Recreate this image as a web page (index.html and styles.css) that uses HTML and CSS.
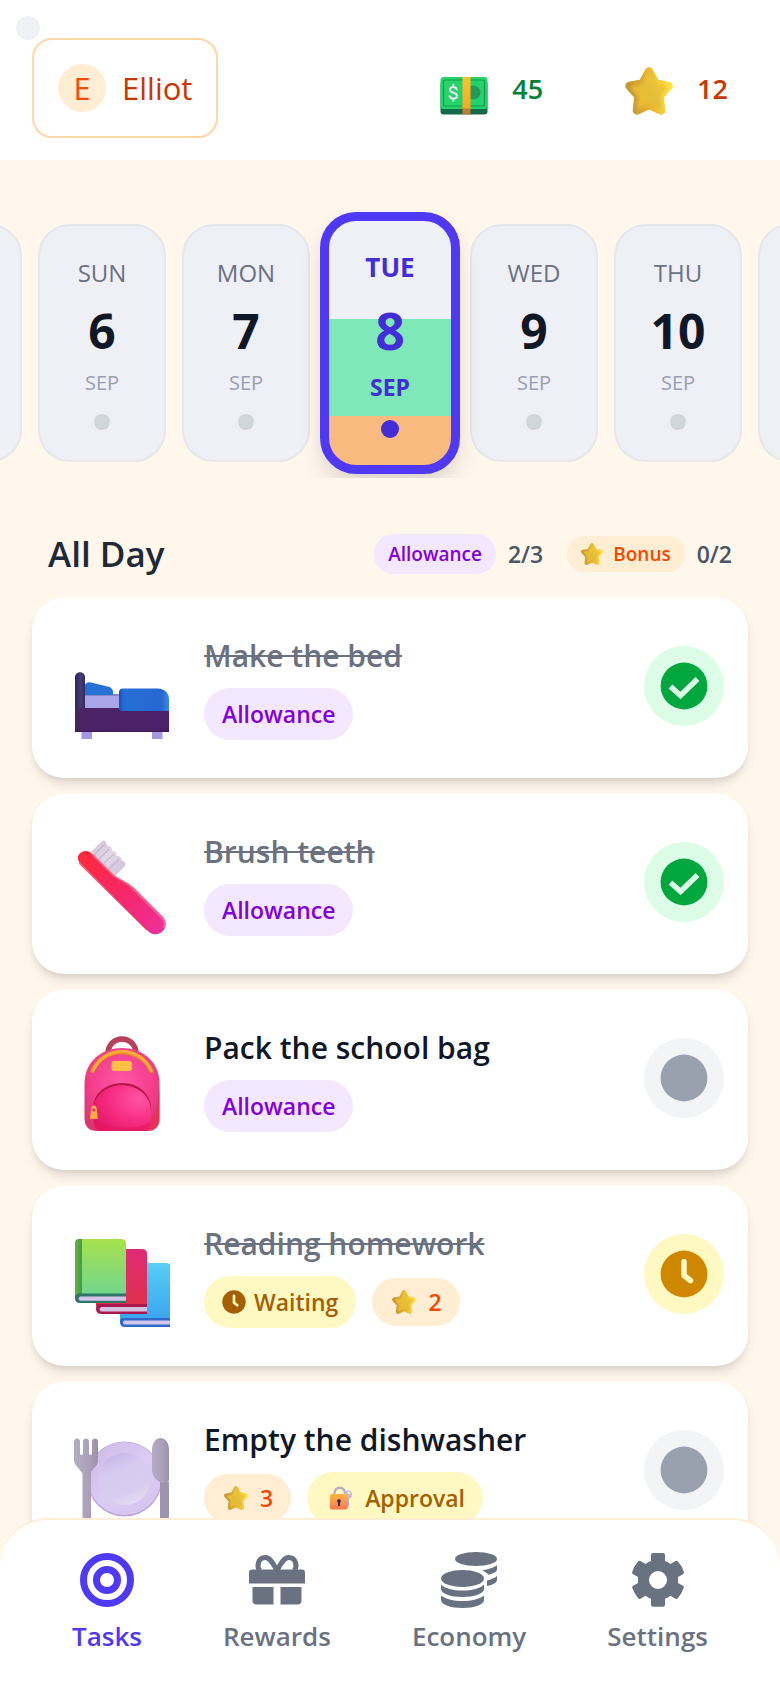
FILE: index.html
```html
<!DOCTYPE html>
<html lang="en">
<head>
<meta charset="utf-8">
<meta name="viewport" content="width=device-width, initial-scale=1">
<title>Tasks</title>
<link rel="stylesheet" href="styles.css">
</head>
<body>
<svg class="sprite" aria-hidden="true">
  <defs>
    <linearGradient id="star-edge" x1="0" y1="0.3" x2="1" y2="0.2"><stop offset="0" stop-color="#c79a34"/><stop offset="0.5" stop-color="#e8b631"/><stop offset="1" stop-color="#ffe03f"/></linearGradient>
    <linearGradient id="star-face" x1="0" y1="1" x2="1" y2="0"><stop offset="0" stop-color="#efb92f"/><stop offset="0.5" stop-color="#e3be38"/><stop offset="1" stop-color="#f2c935"/></linearGradient>
    <filter id="soft" x="-20%" y="-20%" width="140%" height="140%"><feGaussianBlur stdDeviation="1.5"/></filter>
    <linearGradient id="cash" x1="0" x2="1" y2="1"><stop offset="0" stop-color="#2bd36b"/><stop offset="1" stop-color="#1fd36e"/></linearGradient>
    <linearGradient id="band" x2="0" y2="1"><stop offset="0" stop-color="#ffc22e"/><stop offset="1" stop-color="#fba522"/></linearGradient>
    <linearGradient id="wood" x2="1"><stop offset="0" stop-color="#3a2a52"/><stop offset="0.08" stop-color="#4d2366"/><stop offset="1" stop-color="#4b2069"/></linearGradient>
    <linearGradient id="post" x2="1"><stop offset="0" stop-color="#2f2558"/><stop offset="0.6" stop-color="#463b76"/><stop offset="1" stop-color="#352a5a"/></linearGradient>
    <linearGradient id="quilt" x2="1"><stop offset="0" stop-color="#1d4fb4"/><stop offset="0.1" stop-color="#246fd4"/><stop offset="0.85" stop-color="#2768d2"/><stop offset="1" stop-color="#3f8ae0"/></linearGradient>
    <linearGradient id="handle" gradientUnits="userSpaceOnUse" x1="8" y1="15" x2="86" y2="90"><stop offset="0" stop-color="#ff2a3a"/><stop offset="0.5" stop-color="#f62768"/><stop offset="1" stop-color="#ee2f98"/></linearGradient>
    <linearGradient id="bristle" gradientUnits="userSpaceOnUse" x1="16" y1="8" x2="46" y2="36" ><stop offset="0" stop-color="#d4c7d8"/><stop offset="0.5" stop-color="#e3d8ea"/><stop offset="1" stop-color="#cfc0d8"/></linearGradient>
    <radialGradient id="bag" cx="0.5" cy="0.4" r="0.65"><stop offset="0" stop-color="#ff57a5"/><stop offset="0.65" stop-color="#f33d8c"/><stop offset="1" stop-color="#d8386f"/></radialGradient>
    <radialGradient id="pocket" cx="0.8" cy="0.3" r="0.9"><stop offset="0" stop-color="#ff54a2"/><stop offset="0.6" stop-color="#f62a80"/><stop offset="1" stop-color="#e01765"/></radialGradient>
    <linearGradient id="book-g" x2="0" y2="1"><stop offset="0" stop-color="#a6e14c"/><stop offset="1" stop-color="#72d68e"/></linearGradient>
    <linearGradient id="spine-g" x2="1"><stop offset="0" stop-color="#65b53e"/><stop offset="1" stop-color="#419b4c"/></linearGradient>
    <linearGradient id="book-r" x2="0" y2="1"><stop offset="0" stop-color="#df2b75"/><stop offset="1" stop-color="#e0314d"/></linearGradient>
    <linearGradient id="book-b" x2="0" y2="1"><stop offset="0" stop-color="#56cff5"/><stop offset="1" stop-color="#3aa3f0"/></linearGradient>
    <linearGradient id="plate" x2="1" y2="1"><stop offset="0" stop-color="#cbb9e6"/><stop offset="0.5" stop-color="#dccbf3"/><stop offset="1" stop-color="#d5c4ee"/></linearGradient>
    <linearGradient id="dish" x1="0.3" x2="0.7" y2="1"><stop offset="0" stop-color="#c8b5e9"/><stop offset="0.3" stop-color="#d7caf0"/><stop offset="0.75" stop-color="#d8cdef"/><stop offset="1" stop-color="#e6def5"/></linearGradient>
    <linearGradient id="steel" x2="1"><stop offset="0" stop-color="#b5abc3"/><stop offset="0.6" stop-color="#aca1bb"/><stop offset="1" stop-color="#9c90ad"/></linearGradient>
    <linearGradient id="lock" x2="0" y2="1"><stop offset="0" stop-color="#ffb545"/><stop offset="1" stop-color="#f9784f"/></linearGradient>
  </defs>

  <symbol id="i-star" viewBox="0 0 48 48">
    <path d="M24 4.500L30.500 16.500L43.500 19L34.500 29L36 43.500L24 38L12 43.500L13.500 29L4.500 19L17.500 16.500Z" fill="url(#star-edge)" stroke="url(#star-edge)" stroke-width="8.500" stroke-linejoin="round"/>
    <path d="M24 8L30 19L40 20.500L32.500 29L34 40L24 35L14 40L15.500 29L8 20.500L18 19Z" fill="url(#star-face)" stroke="url(#star-face)" stroke-width="3" stroke-linejoin="round" filter="url(#soft)"/>
  </symbol>

  <symbol id="i-cash" viewBox="0 0 48 48">
    <rect x="0.500" y="14" width="47" height="33.500" rx="3" fill="#146b4a"/>
    <rect x="0.500" y="10" width="47" height="32" rx="3" fill="url(#cash)"/>
    <rect x="3.500" y="13" width="41" height="26" rx="2" fill="none" stroke="#159a4c" stroke-width="1.200"/>
    <circle cx="33.500" cy="25.500" r="7" fill="#249b58"/>
    <path d="M16.800 22.500c-.6-1.700-1.800-2.500-3.500-2.500-2.100 0-3.500 1.100-3.500 2.800 0 3.900 7.200 2 7.200 6 0 1.700-1.500 2.800-3.600 2.800-2 0-3.300-.9-3.900-2.700M13.300 17.800v2.200M13.300 31.600v2.200" fill="none" stroke="#f0eaf2" stroke-width="1.900" stroke-linecap="round"/>
    <rect x="22.500" y="10" width="8" height="32" fill="url(#band)"/>
    <rect x="22.500" y="41.500" width="8" height="6" fill="#c27c35"/>
  </symbol>

  <symbol id="i-bed" viewBox="0 0 96 96">
    <path d="M7.500 87h10.500v8H7.500zM78 87h10.500v8H78z" fill="#a697e6"/>
    <path d="M10 50h40v16H10z" fill="#a9a5e6"/>
    <path d="M10 50h40v2H10z" fill="#8b86c6"/>
    <path d="M10 51V43c1-4 4-5.500 7-4.500l18.500 4.500c2.500 1 3.500 3 3.500 5v3z" fill="#2571d5"/>
    <path d="M1 64h94v24H1z" fill="url(#wood)"/>
    <path d="M1 64V33c0-6.500 10-6.500 10 0v31z" fill="url(#post)"/>
    <path d="M45 48.500q0-4 4-4h35c7 0 11 5 11 11V67H48q-3 0-3-3z" fill="url(#quilt)"/>
    <path d="M1 87.200h94" stroke="#3a1a55" stroke-width="1"/>
  </symbol>

  <symbol id="i-brush" viewBox="0 0 96 96">
    <path d="M15 14L27 2q3-3 5 0l1.500 4q5 0 4.500 5 5 0 4.500 5 5-.5 5 4.500 5 1 3.500 5.500L39 38z" fill="url(#bristle)"/>
    <path d="M18 17L31 4M23 21L35 9M27 26L40 14M33 31L45 19" stroke="#c2b5c8" stroke-width="1.500" opacity="0.8"/>
    <path d="M5.500 22.500C0 15 10 7.500 17 13L40 35.500 54 43.500Q58 46 60 48L89 77C97 87 85 99.500 75 92L71 88z" fill="url(#handle)"/>
    <path d="M19 15L40 36 55 45 88 78c3 3.500 3 7 1.500 10" fill="none" stroke="#ff6f91" stroke-width="2" opacity="0.7"/>
    <path d="M5 23L73 90" stroke="#d9244d" stroke-width="1.200" opacity="0.7"/>
  </symbol>

  <symbol id="i-bag" viewBox="0 0 96 96">
    <path d="M34 18C34-2 62-2 62 18" fill="none" stroke="#b93f5b" stroke-width="5.500"/>
    <path d="M10.500 48C10.500 0 85.500 0 85.500 48V82q0 13-13 13H23.500q-13 0-13-13z" fill="url(#bag)"/>
    <path d="M85.500 50V82q0 13-13 13H64c14-5 20-20 21.500-45z" fill="#ef2e52" opacity="0.7"/>
    <path d="M18.500 35C29 10 66 10 77.500 35" fill="none" stroke="#e9832c" stroke-width="4.500" stroke-linecap="round"/>
    <path d="M19 34.500C30 9 66 9 77 34.500" fill="none" stroke="#fbac36" stroke-width="3" stroke-linecap="round"/>
    <rect x="37.500" y="25" width="20.500" height="10" rx="3" fill="#ffc044"/>
    <path d="M20 72C22 40 76 40 76 74" fill="none" stroke="#b91549" stroke-width="2.500"/>
    <path d="M19 78C17 40 79 40 77 78q-.5 11-4.500 17H23.500q-4.500-6-4.500-17z" fill="url(#pocket)"/>
    <path d="M20 90Q22 95 26 95h46q4-3 4-8Q50 98 20 84z" fill="#e41861" opacity="0.6"/>
    <path d="M17 75v-1c0-6 6-6 6 0v1l.8 8H16z" fill="#ffad45"/>
    <circle cx="20" cy="74" r="1.600" fill="#d9375c"/>
  </symbol>

  <symbol id="i-books" viewBox="0 -4 96 96">
    <path d="M46 27h46q5 0 5 5v54H46z" fill="url(#book-b)"/>
    <path d="M49 82h48v9H51q-5 0-5-5 0-4 3-4z" fill="#2e68c8"/>
    <path d="M50 84.500h47v4H50q-2-2 0-4z" fill="#d3c6ec"/>
    <path d="M22 13h46q5 0 5 5v52H22z" fill="url(#book-r)"/>
    <path d="M25 68h48v10H28q-6 0-6-5 0-5 3-5z" fill="#a9194f"/>
    <path d="M27 71h46v4.500H27q-3-2 0-4.500z" fill="#d8bfe4"/>
    <path d="M6 3h41q5 0 5 4v52H6z" fill="url(#book-g)"/>
    <path d="M1 61V7q0-4 4-4h3v58z" fill="url(#spine-g)"/>
    <path d="M5 57.500h47V67H6q-5 0-5-5 0-4 4-4.500z" fill="#2d7566"/>
    <path d="M6 60.500h46v4.300H6q-3-2 0-4.300z" fill="#d5c2ea"/>
  </symbol>

  <symbol id="i-plate" viewBox="0 -10 96 96">
    <circle cx="50.500" cy="41" r="37.500" fill="#b9a6d6"/>
    <circle cx="50.500" cy="40.500" r="36.500" fill="url(#plate)"/>
    <circle cx="50.500" cy="41" r="26" fill="url(#dish)"/>
    <path d="M0 3c0-1.500 2-2.500 3-2.500S6 1.500 6 3v13q1.500 2 3 0V3c0-1.500 1.500-2.500 3-2.500s3 1 3 2.500v13q1.500 2 3 0V3c0-1.500 1.500-2.500 3-2.500s3 1 3 2.500v20q0 3-3 6l-4 5V97H8.500V35.500L3 28.500q-3-3-3-6z" fill="url(#steel)"/>
    <path d="M86 44h9v52h-9z" fill="#9f94b0"/>
    <path d="M78 12c0-16 17-16 17 0v31q-4 3-9 1-8-4-8-12z" fill="url(#steel)"/>
  </symbol>

  <symbol id="i-lock" viewBox="0 0 24 24">
    <path d="M5.500 11V7c0-7 10.500-7 10.500 0v4" fill="none" stroke="#b5adc4" stroke-width="2.400"/>
    <path d="M20 12v8l-2 2.500V12z" fill="#b9acd4"/>
    <circle cx="19" cy="8.500" r="4" fill="#c5b8dd"/>
    <circle cx="20" cy="7" r="1.200" fill="#fef9c2"/>
    <rect x="1" y="8" width="17.500" height="15.500" rx="1.500" fill="url(#lock)"/>
    <path d="M10 13a2 2 0 0 1 1 3.700V20H9v-3.300A2 2 0 0 1 10 13z" fill="#3c2a5c"/>
  </symbol>

  <symbol id="i-check" viewBox="0 0 48 48">
    <circle cx="24" cy="24" r="23.400" fill="#00a63e"/>
    <path d="M10.500 24.500L20.500 33.500L37.500 17" fill="none" stroke="#dcfce7" stroke-width="5.500"/>
  </symbol>
  <symbol id="i-clock" viewBox="0 0 48 48">
    <circle cx="24" cy="24" r="23.400" fill="currentColor"/>
    <path d="M24 11.500V25.500L30.500 30.500" fill="none" stroke="#fef9c2" stroke-width="5.500" stroke-linejoin="round" stroke-linecap="round"/>
  </symbol>
  <symbol id="i-dot" viewBox="0 0 48 48"><circle cx="24" cy="24" r="23.400" fill="#99a1af"/></symbol>

  <symbol id="i-target" viewBox="0 0 56 56">
    <g fill="none" stroke="currentColor"><circle cx="28" cy="28" r="23.500" stroke-width="7"/><circle cx="28" cy="28" r="10.500" stroke-width="7"/></g>
  </symbol>
  <symbol id="i-gift" viewBox="0 0 56 56">
    <path d="M3 17.500H53a3 3 0 0 1 3 3V31.500H0V20.500a3 3 0 0 1 3-3z" fill="currentColor"/>
    <path d="M3.500 35H24.500V52.500H7.500a4 4 0 0 1-4-4zM31.500 35H52.500V48.500a4 4 0 0 1-4 4H31.500z" fill="currentColor"/>
    <path d="M28 18.500C24 11 21 5.500 16.500 5.500C8.500 5.500 7.500 15 11 18.500M28 18.500C32 11 35 5.500 39.500 5.500C47.500 5.500 48.500 15 45 18.500" fill="none" stroke="currentColor" stroke-width="5"/>
  </symbol>
  <symbol id="i-coins" viewBox="0 0 56 56">
    <g fill="currentColor">
      <ellipse cx="35" cy="7" rx="21" ry="7"/>
      <path d="M56 13v4.500c0 2-3.500 4-8.500 5.200-1.500-1.700-4-3.300-6.500-4.400 6-.8 12-2.600 15-5.300z"/>
      <path d="M46 28.500c3.800-.9 8-2.600 10-4.500V28c0 2.500-4 5-10 6z"/>
      <ellipse cx="21.500" cy="26.500" rx="21.500" ry="8.500"/>
      <path d="M0 32.500c4 4 12.500 6 21.500 6s17.500-2 21.500-6V37c0 4.500-9.600 8-21.500 8S0 41.500 0 37z"/>
      <path d="M0 43.500c4 3.500 12.500 5.500 21.500 5.500s17.500-2 21.500-5.500V48c0 4.500-9.600 8-21.500 8S0 52.500 0 48z"/>
    </g>
  </symbol>
  <symbol id="i-gear" viewBox="0 0 56 56">
    <path fill="currentColor" fill-rule="evenodd" d="M23 1h10a2 2 0 0 1 2 2v6q3 1 5.500 3l5-3q1.500-.6 2.500.5 4.500 5 6 11-.2 1.300-1.500 2l-4.500 2.500v6l5 2.800q1 .7.800 2-2 6-6 10.500-1 1-2.300.5l-5-3q-2.500 2-5.500 3v6a2 2 0 0 1-2 2H23a2 2 0 0 1-2-2v-6q-3-1-5.500-3l-5 3q-1.300.5-2.300-.5-4-4.500-6-10.500-.2-1.300.8-2l5-2.800v-6L3.500 22.500q-1.300-.7-1.500-2 1.500-6 6-11 1-1.100 2.500-.5l5 3q2.500-2 5.500-3V3a2 2 0 0 1 2-2zM28 19a9 9 0 1 0 0 18a9 9 0 1 0 0-18z"/>
  </symbol>
</svg>

<header class="header">
  <span class="status-dot"></span>
  <button class="profile" type="button"><span class="avatar">E</span><span>Elliot</span></button>
  <div class="stats">
    <div class="stat stat--money"><svg class="stat__icon"><use href="#i-cash"/></svg><span>45</span></div>
    <div class="stat stat--stars"><svg class="stat__icon"><use href="#i-star"/></svg><span>12</span></div>
  </div>
</header>

<main class="main">
  <div class="days">
    <button class="day" type="button" aria-label="Previous day"></button>
    <button class="day" type="button"><span class="day__name">SUN</span><span class="day__num">6</span><span class="day__month">SEP</span><span class="day__dot"></span></button>
    <button class="day" type="button"><span class="day__name">MON</span><span class="day__num">7</span><span class="day__month">SEP</span><span class="day__dot"></span></button>
    <button class="day day--active" type="button" aria-current="date"><span class="day__name">TUE</span><span class="day__num">8</span><span class="day__month">SEP</span><span class="day__dot"></span></button>
    <button class="day" type="button"><span class="day__name">WED</span><span class="day__num">9</span><span class="day__month">SEP</span><span class="day__dot"></span></button>
    <button class="day" type="button"><span class="day__name">THU</span><span class="day__num">10</span><span class="day__month">SEP</span><span class="day__dot"></span></button>
    <button class="day" type="button" aria-label="Next day"></button>
  </div>

  <section class="tasks">
    <div class="tasks__head">
      <h2 class="tasks__title">All Day</h2>
      <div class="summary">
        <span class="pill pill--small pill--allowance">Allowance</span><span class="summary__count">2/3</span>
      </div>
      <div class="summary">
        <span class="pill pill--tiny pill--bonus"><svg class="pill__icon"><use href="#i-star"/></svg>Bonus</span><span class="summary__count">0/2</span>
      </div>
    </div>

    <ul class="list">
      <li class="card card--done">
        <svg class="card__icon"><use href="#i-bed"/></svg>
        <div class="card__body"><h3 class="card__title">Make the bed</h3><div class="pills"><span class="pill pill--allowance">Allowance</span></div></div>
        <button class="check check--done" type="button" aria-label="Make the bed: done"><svg class="check__icon"><use href="#i-check"/></svg></button>
      </li>
      <li class="card card--done">
        <svg class="card__icon"><use href="#i-brush"/></svg>
        <div class="card__body"><h3 class="card__title">Brush teeth</h3><div class="pills"><span class="pill pill--allowance">Allowance</span></div></div>
        <button class="check check--done" type="button" aria-label="Brush teeth: done"><svg class="check__icon"><use href="#i-check"/></svg></button>
      </li>
      <li class="card">
        <svg class="card__icon"><use href="#i-bag"/></svg>
        <div class="card__body"><h3 class="card__title">Pack the school bag</h3><div class="pills"><span class="pill pill--allowance">Allowance</span></div></div>
        <button class="check" type="button" aria-label="Pack the school bag: to do"><svg class="check__icon"><use href="#i-dot"/></svg></button>
      </li>
      <li class="card card--done">
        <svg class="card__icon"><use href="#i-books"/></svg>
        <div class="card__body"><h3 class="card__title">Reading homework</h3><div class="pills"><span class="pill pill--waiting"><svg class="pill__icon"><use href="#i-clock"/></svg>Waiting</span><span class="pill pill--reward pill--bonus"><svg class="pill__icon"><use href="#i-star"/></svg>2</span></div></div>
        <button class="check check--waiting" type="button" aria-label="Reading homework: waiting"><svg class="check__icon"><use href="#i-clock"/></svg></button>
      </li>
      <li class="card">
        <svg class="card__icon"><use href="#i-plate"/></svg>
        <div class="card__body"><h3 class="card__title">Empty the dishwasher</h3><div class="pills"><span class="pill pill--reward pill--bonus"><svg class="pill__icon"><use href="#i-star"/></svg>3</span><span class="pill pill--approval"><svg class="pill__icon"><use href="#i-lock"/></svg>Approval</span></div></div>
        <button class="check" type="button" aria-label="Empty the dishwasher: to do"><svg class="check__icon"><use href="#i-dot"/></svg></button>
      </li>
    </ul>
  </section>
</main>

<nav class="nav">
  <a class="nav__item nav__item--active" href="#tasks"><svg class="nav__icon"><use href="#i-target"/></svg>Tasks</a>
  <a class="nav__item" href="#rewards"><svg class="nav__icon"><use href="#i-gift"/></svg>Rewards</a>
  <a class="nav__item" href="#economy"><svg class="nav__icon"><use href="#i-coins"/></svg>Economy</a>
  <a class="nav__item" href="#settings"><svg class="nav__icon"><use href="#i-gear"/></svg>Settings</a>
</nav>
</body>
</html>
```

FILE: styles.css
```css
* { box-sizing: border-box; margin: 0; padding: 0; }

body {
  min-height: 100vh;
  background: #fff6ec;
  color: #101828;
  font-family: "Segoe UI", "Open Sans", "Noto Sans", sans-serif;
  font-size: 24px;
}

button { border: 0; background: none; color: inherit; font: inherit; cursor: pointer; }
svg { display: block; flex: none; overflow: visible; }
.sprite { position: absolute; width: 0; height: 0; }

.header {
  position: relative;
  display: flex;
  align-items: center;
  justify-content: space-between;
  padding: 38px 32px 22px;
  background: #fff;
}
.status-dot {
  position: absolute;
  top: 16px;
  left: 16px;
  width: 24px;
  height: 24px;
  border-radius: 50%;
  background: #f0f1f4;
}
.profile {
  display: flex;
  align-items: center;
  gap: 16px;
  height: 100px;
  padding: 0 24px;
  border: 2px solid #ffd6a7;
  border-radius: 20px;
  color: #ca3500;
  font-size: 31px;
}
.avatar {
  display: grid;
  place-items: center;
  width: 48px;
  height: 48px;
  border-radius: 50%;
  background: #ffedd4;
  color: #f54900;
}
.stats { display: flex; gap: 42px; }
.stat {
  display: flex;
  align-items: center;
  gap: 24px;
  padding: 0 20px;
  font-size: 27px;
  font-weight: 600;
}
.stat__icon { width: 48px; height: 54px; padding-top: 6px; }
.stat--money { color: #008236; }
.stat--stars { color: #ca3500; }

.main { padding: 48px 0 112px; }

.days {
  display: flex;
  align-items: center;
  justify-content: center;
  gap: 16px;
  padding: 16px 0;
  overflow: hidden;
}
.day {
  display: flex;
  flex: none;
  flex-direction: column;
  align-items: center;
  width: 128px;
  height: 238px;
  padding: 31px 0 0;
  border: 2px solid #e5e7eb;
  border-radius: 32px;
  background: #eff0f6;
}
.day > * { flex: none; }
.day__name { color: #6a7282; font-size: 24px; line-height: 32px; }
.day__num { margin-top: 12px; font-size: 48px; font-weight: 700; line-height: 60px; }
.day__month { margin-top: 8px; color: #99a1af; font-size: 20px; line-height: 28px; }
.day__dot { width: 16px; height: 16px; margin-top: 17px; border-radius: 50%; background: #d1d5dc; }
.day--active {
  z-index: 1;
  width: 140px;
  height: 262px;
  margin: -12px -6px;
  padding: 28px 0 0;
  border: 9px solid #4f39f6;
  border-radius: 36px;
  background: linear-gradient(#eff0f6 40%, #7ee8b8 40% 80%, #f9ba80 80%);
  box-shadow: 0 12px 24px -4px rgb(0 0 0 / 16%);
}
.day--active > * { color: #432dd7; font-weight: 700; }
.day--active .day__name { font-size: 26px; line-height: 36px; }
.day--active .day__num { font-size: 52px; line-height: 66px; }
.day--active .day__month { font-size: 23px; line-height: 32px; }
.day--active .day__dot { width: 18px; height: 18px; background: #432dd7; }

.tasks { padding: 48px 32px 0; }
.tasks__head { display: flex; align-items: center; gap: 24px; height: 56px; margin-bottom: 16px; padding: 0 16px; }
.tasks__title { flex: 1; color: #1e2939; font-size: 35px; font-weight: 600; line-height: 48px; }
.summary { display: flex; align-items: center; gap: 12px; }
.summary__count { color: #4a5565; font-size: 23px; font-weight: 600; }

.list { display: grid; gap: 16px; list-style: none; }
.card {
  display: flex;
  align-items: center;
  gap: 34px;
  min-height: 180px;
  padding: 0 24px 0 42px;
  border-radius: 32px;
  background: #fff;
  box-shadow: 0 8px 12px -2px rgb(0 0 0 / 10%), 0 4px 8px -4px rgb(0 0 0 / 12%);
}
.card__icon { width: 96px; height: 104px; padding-top: 8px; }
.card__body { display: grid; flex: 1; gap: 12px; }
.card__title { font-size: 30px; font-weight: 600; line-height: 40px; }
.card--done .card__title { color: #6a7282; text-decoration: line-through; text-decoration-thickness: 2px; }

.pills { display: flex; align-items: center; gap: 16px; min-height: 52px; }
.pill {
  display: flex;
  align-items: center;
  gap: 8px;
  height: 52px;
  padding: 0 18px;
  border-radius: 26px;
  font-size: 23px;
  font-weight: 600;
}
.pill__icon { width: 24px; height: 24px; }
.pill--allowance { background: #f3e8ff; color: #8200db; }
.pill--bonus { background: #ffedd4; color: #f54900; }
.pill--waiting, .pill--approval { background: #fef9c2; color: #a65f00; }
.pill--approval { gap: 12px; padding: 0 18px 0 22px; }
.pill--reward { gap: 12px; height: 48px; padding: 0 18px 0 20px; }
.pill--small { height: 40px; padding: 0 14px; font-size: 19px; }
.pill--tiny { gap: 10px; height: 36px; padding: 0 14px; font-size: 19px; }
.pill--tiny .pill__icon { width: 22px; height: 22px; }

.check {
  display: grid;
  flex: none;
  place-items: center;
  width: 80px;
  height: 80px;
  margin-bottom: 4px;
  border-radius: 50%;
  background: #f3f4f6;
}
.check--done { background: #dcfce7; }
.check--waiting { background: #fef9c2; color: #d08700; }
.check__icon { width: 48px; height: 48px; }

.nav {
  position: fixed;
  z-index: 2;
  right: 0;
  bottom: 0;
  left: 0;
  display: flex;
  justify-content: space-between;
  height: 170px;
  padding: 32px 72px 0;
  border-top: 2px solid #ffedd4;
  border-radius: 48px 48px 0 0;
  background: #fff;
}
.nav__item {
  display: flex;
  flex-direction: column;
  align-items: center;
  gap: 8px;
  color: #6a7282;
  font-size: 26px;
  font-weight: 600;
  line-height: 40px;
  text-decoration: none;
}
.nav__item--active { color: #4f39f6; }
.nav__icon { width: 56px; height: 56px; }
```
